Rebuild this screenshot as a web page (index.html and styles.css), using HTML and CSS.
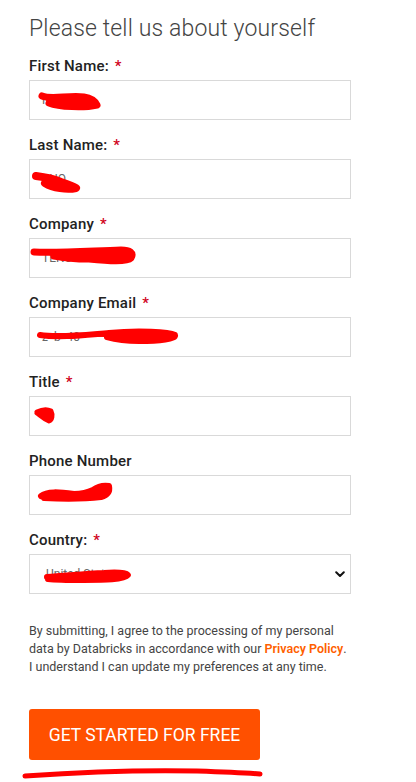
FILE: index.html
```html
<!DOCTYPE html>
<html lang="en">

<head>
    <meta charset="UTF-8">
    <meta name="viewport" content="width=device-width, initial-scale=1.0">
    <title>Get Started</title>
    <link rel="stylesheet" href="styles.css">
</head>

<body>
    <form class="signup-form">
        <h1>Please tell us about yourself</h1>

        <div class="field">
            <label>First Name: <span class="req">*</span></label>
            <div class="control">
                <input type="text" value="R N" class="blurred">
                <svg class="scribble" width="120" height="40">
                    <path d="M13 16 C22 20, 40 15, 55 17 C62 18, 66 21, 68 25 C55 28, 30 27, 20 23" fill="#ff0000" stroke="#ff0000" stroke-width="7" stroke-linecap="round" stroke-linejoin="round"/>
                </svg>
            </div>
        </div>

        <div class="field">
            <label>Last Name: <span class="req">*</span></label>
            <div class="control">
                <input type="text" value="ZHO" class="blurred">
                <svg class="scribble" width="120" height="40">
                    <path d="M7 17 C15 18, 25 20, 32 23 C38 25, 44 27, 47 29 C38 31, 24 29, 16 24" fill="#ff0000" stroke="#ff0000" stroke-width="8" stroke-linecap="round" stroke-linejoin="round"/>
                </svg>
            </div>
        </div>

        <div class="field">
            <label>Company <span class="req">*</span></label>
            <div class="control">
                <input type="text" value="TENCE" class="blurred">
                <svg class="scribble" width="140" height="40">
                    <path d="M5 14 C30 15, 60 13, 92 12 C101 12, 105 15, 102 20 C98 24, 80 23, 60 21 C45 21, 35 20, 25 18" fill="#ff0000" stroke="#ff0000" stroke-width="7" stroke-linecap="round" stroke-linejoin="round"/>
                </svg>
            </div>
        </div>

        <div class="field">
            <label>Company Email <span class="req">*</span></label>
            <div class="control">
                <input type="text" value="z  b  40" class="blurred">
                <svg class="scribble" width="170" height="40">
                    <path d="M11 18 C30 21, 55 18, 80 16 C110 13, 140 15, 146 18 C148 22, 130 24, 110 24 C95 24, 85 22, 78 20" fill="#ff0000" stroke="#ff0000" stroke-width="6" stroke-linecap="round" stroke-linejoin="round"/>
                </svg>
            </div>
        </div>

        <div class="field">
            <label>Title <span class="req">*</span></label>
            <div class="control">
                <input type="text" value="" class="blurred">
                <svg class="scribble" width="40" height="40">
                    <path d="M8 16 C12 14, 18 13, 22 15 C24 19, 23 24, 20 25 C15 23, 12 20, 8 17" fill="#ff0000" stroke="#ff0000" stroke-width="5" stroke-linecap="round" stroke-linejoin="round"/>
                </svg>
            </div>
        </div>

        <div class="field">
            <label>Phone Number</label>
            <div class="control">
                <input type="text" value="  6" class="blurred">
                <svg class="scribble" width="120" height="40">
                    <path d="M12 21 C18 16, 30 17, 45 19 C55 19, 60 17, 64 15 C68 12, 74 10, 80 11 C81 16, 79 20, 72 22 C55 24, 35 24, 15 23" fill="#ff0000" stroke="#ff0000" stroke-width="6" stroke-linecap="round" stroke-linejoin="round"/>
                </svg>
            </div>
        </div>

        <div class="field">
            <label>Country: <span class="req">*</span></label>
            <div class="control">
                <select class="blurred">
                    <option>United States</option>
                </select>
                <svg class="chevron" width="10" height="7" viewBox="0 0 10 7">
                    <path d="M1.2 1.2 L5 5 L8.8 1.2" fill="none" stroke="#111" stroke-width="2" stroke-linecap="round" stroke-linejoin="round"/>
                </svg>
                <svg class="scribble" width="120" height="40">
                    <path d="M18 23 C35 22, 55 20, 75 19 C88 18, 97 19, 99 21 C95 26, 75 26, 55 26 C40 26, 28 26, 19 25" fill="#ff0000" stroke="#ff0000" stroke-width="6" stroke-linecap="round" stroke-linejoin="round"/>
                </svg>
            </div>
        </div>

        <p class="consent">
            By submitting, I agree to the processing of my personal<br>
            data by Databricks in accordance with our <a href="#">Privacy Policy</a>.<br>
            I understand I can update my preferences at any time.
        </p>

        <button type="submit" class="submit">GET STARTED FOR FREE</button>
        <svg class="underline" width="250" height="14">
            <path d="M3 9 C60 5, 130 3, 175 4 C205 5, 225 6, 238 7" fill="none" stroke="#ff0000" stroke-width="5" stroke-linecap="round"/>
        </svg>
    </form>
</body>

</html>
```

FILE: styles.css
```css
body {
    font-family: Roboto, "Liberation Sans", sans-serif;
    background-color: #fff;
    color: #222;
    margin: 0;
    padding: 0 29px;
}

.signup-form {
    width: 322px;
    display: flex;
    flex-direction: column;
}

h1 {
    font-size: 23px;
    font-weight: 300;
    color: #444;
    margin: 15px 0 14px;
    line-height: 28px;
    letter-spacing: 0.15px;
}

.field {
    display: flex;
    flex-direction: column;
    margin-bottom: 16px;
}

.field label {
    font-size: 15px;
    font-weight: 500;
    line-height: 18px;
    margin-bottom: 5px;
    color: #222;
    letter-spacing: 0.2px;
}

.req {
    color: #d0021b;
    margin-left: 2px;
}

.control {
    position: relative;
}

.control input,
.control select {
    box-sizing: border-box;
    width: 100%;
    height: 40px;
    border: 1px solid #d9d9d9;
    border-radius: 0;
    background: #fff;
    padding: 0 12px;
    font-family: inherit;
    font-size: 12px;
    color: #666;
    outline: none;
}

.control select {
    appearance: none;
    -webkit-appearance: none;
    padding-left: 16px;
}

.blurred {
    color: #777;
}

.scribble {
    position: absolute;
    left: 0;
    top: 0;
    pointer-events: none;
}

.chevron {
    position: absolute;
    right: 6px;
    top: 17px;
    pointer-events: none;
}

.consent {
    font-size: 12.5px;
    line-height: 18px;
    color: #444;
    white-space: nowrap;
    margin: 12px 0 33px;
}

.consent a {
    color: #ff5f00;
    font-weight: 600;
    text-decoration: none;
}

.submit {
    align-self: flex-start;
    width: 231px;
    height: 51px;
    background-color: #ff5000;
    color: #fff;
    border: none;
    border-radius: 3px;
    font-family: inherit;
    font-size: 17.5px;
    font-weight: 400;
    cursor: pointer;
}

.underline {
    display: block;
    margin: 7px 0 0 -7px;
}
```
